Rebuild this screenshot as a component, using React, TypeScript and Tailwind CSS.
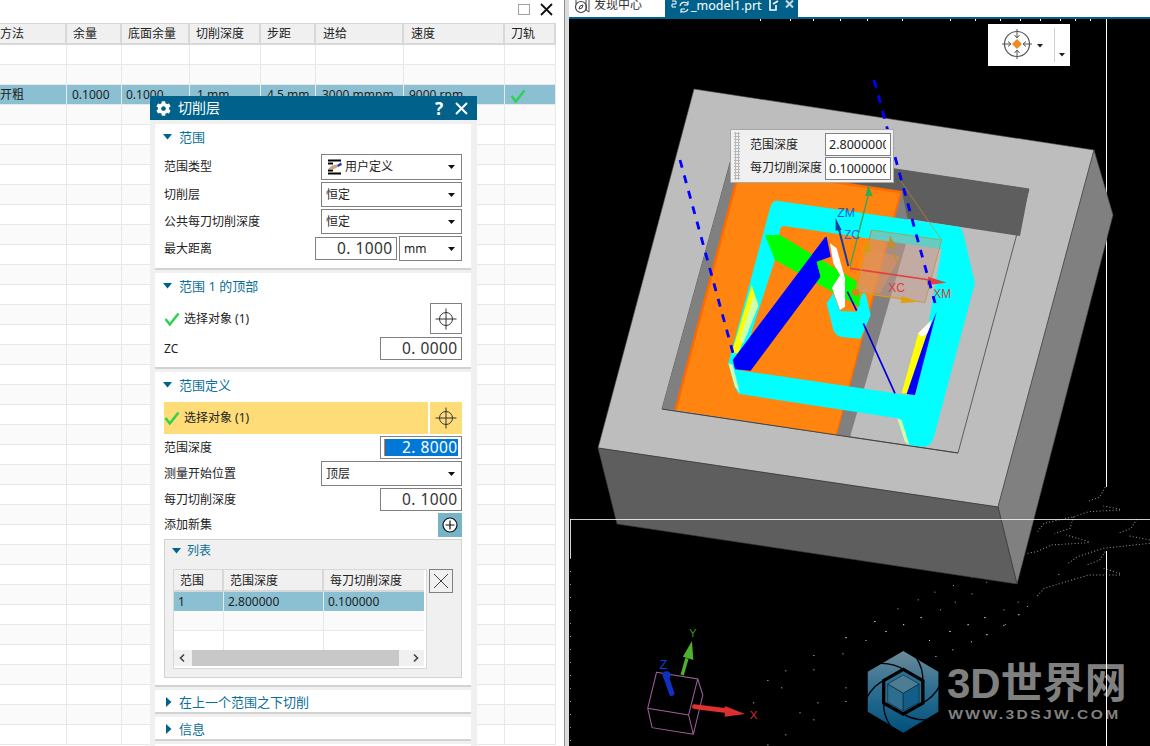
import React from "react";
import { FaCog } from "react-icons/fa";

const cols = [67, 55, 68, 71, 55, 88, 101, 51];
const headers = ["方法", "余量", "底面余量", "切削深度", "步距", "进给", "速度", "刀轨"];
const selected = ["开粗", "0.1000", "0.1000", "1 mm", "4.5 mm", "3000 mmpm", "9000 rpm", ""];
const pads = ["pl-0", "pl-[5px]", "pl-[4px]", "pl-[7px]", "pl-[6px]", "pl-[6px]", "pl-[5px]", "pl-[5px]"];
const hpads = ["pl-0", "pl-[6px]", "pl-[6px]", "pl-[6px]", "pl-[6px]", "pl-[7px]", "pl-[7px]", "pl-[6px]"];
const gridCls = "grid grid-cols-[67px_55px_68px_71px_55px_88px_101px_51px]";

function Check({ size = 16 }: { size?: number }) {
  return (
    <svg width={size} height={size} viewBox="0 0 16 16" className="shrink-0">
      <path d="M1.5 8 L5.8 13.5 L14.5 2.5" fill="none" stroke="#2ed150" strokeWidth="2.5" />
    </svg>
  );
}

function Caret({ open = true }: { open?: boolean }) {
  return open ? (
    <svg width="9" height="6" viewBox="0 0 9 6" className="shrink-0">
      <path d="M0 0 H9 L4.5 5.5Z" fill="#00628a" />
    </svg>
  ) : (
    <svg width="6" height="10" viewBox="0 0 6 10" className="shrink-0">
      <path d="M0 0 V10 L5.5 5Z" fill="#00628a" />
    </svg>
  );
}

function Cross() {
  return (
    <svg width="22" height="22" viewBox="0 0 22 22">
      <circle cx="11" cy="11" r="6.5" fill="none" stroke="#333" />
      <path d="M11 0.5 V21.5 M0.5 11 H21.5" stroke="#333" />
    </svg>
  );
}

function Select({ text, w = "w-[141px]", h = "h-[25px]", icon = false }: { text: string; w?: string; h?: string; icon?: boolean }) {
  return (
    <div className={`${w} ${h} flex items-center border border-[#808080] bg-white pl-[4px] pr-[6px] text-[12px] text-[#222]`}>
      {icon && (
        <svg width="16" height="16" viewBox="0 0 16 16" className="mr-[2px] ml-[1px] shrink-0">
          <path d="M1 1.5 H14 M1 14.5 H14 M1 4.5 H6 M1 11.5 H6" stroke="#000" strokeWidth="2" />
          <path d="M1 10 L5 6.5 L10 5.5 L11 8 L6 10.5Z" fill="#cfa77f" />
          <path d="M10 6 L14 3.5 L15 6 L11 8Z" fill="#2438c4" />
        </svg>
      )}
      <span className="flex-1 leading-none">{text}</span>
      <svg width="7" height="4" viewBox="0 0 7 4" className="shrink-0">
        <path d="M0 0 H7 L3.5 4Z" fill="#111" />
      </svg>
    </div>
  );
}

function NumText({ value }: { value: string }) {
  return <span className="whitespace-nowrap text-[15.5px] leading-none tracking-[0.45px]">{value}</span>;
}

function NumInput({ value, w = "w-[82px]", hl = false }: { value: string; w?: string; hl?: boolean }) {
  return (
    <div className={`${w} h-[23px] border border-[#808080] bg-white py-[2px] pl-[3px] pr-[3px]`}>
      <div
        className={`flex h-full items-center overflow-hidden ${
          hl ? "border-l border-[#f07820] bg-[#0078d7] pl-[17px] text-white" : "pl-[18px] text-[#333]"
        }`}
      >
        <NumText value={value} />
      </div>
    </div>
  );
}

function Row({ label, children }: { label: string; children: React.ReactNode }) {
  return (
    <div className="flex items-center justify-between">
      <span className="text-[12px] leading-none text-[#222]">{label}</span>
      {children}
    </div>
  );
}

function Section({ title, open = true, cls, children }: { title: string; open?: boolean; cls: string; children?: React.ReactNode }) {
  return (
    <div className={`${cls} shrink-0 border-b-2 border-[#d2d2d2] bg-white`}>
      <div className={`flex items-center ${open ? "h-[26px] gap-[7px] pl-[8px]" : "h-[22px] gap-[7px] pl-[11px] pt-[2px]"}`}>
        <Caret open={open} />
        <span className="text-[13px] leading-none text-[#0b6f99]">{title}</span>
      </div>
      {children && <div className="px-[9px] pt-[4px]">{children}</div>}
    </div>
  );
}

function Dialog() {
  return (
    <div className="absolute left-[150px] top-[96px] z-10 flex h-[650px] w-[327px] flex-col overflow-hidden bg-[#f0f0f0]">
      <div className="flex h-[24px] shrink-0 items-center bg-[#00628a] pl-[6px] pr-[9px] text-white">
        <FaCog className="text-[15px]" />
        <span className="ml-[7px] text-[14px] leading-none">切削层</span>
        <span className="ml-auto mr-[12px] text-[17px] font-bold leading-none">?</span>
        <svg width="13" height="13" viewBox="0 0 13 13">
          <path d="M1 1 L12 12 M12 1 L1 12" stroke="#fff" strokeWidth="2" />
        </svg>
      </div>
      <div className="flex flex-col gap-[3px] pl-[5px] pr-[6px] pt-[4px]">
        <Section title="范围" cls="h-[146px]">
          <div className="flex flex-col gap-[2px]">
            <Row label="范围类型"><Select text="用户定义" h="h-[26px]" icon /></Row>
            <Row label="切削层"><Select text="恒定" /></Row>
            <Row label="公共每刀切削深度"><Select text="恒定" /></Row>
            <Row label="最大距离">
              <div className="flex items-center gap-[2px]">
                <NumInput value="0. 100000" />
                <Select text="mm" w="w-[63px]" />
              </div>
            </Row>
          </div>
        </Section>
        <Section title="范围 1 的顶部" cls="h-[96px]">
          <div className="flex flex-col gap-[3px]">
            <div className="flex items-center justify-between">
              <span className="flex items-center gap-[4px] text-[12px] text-[#222]"><Check />选择对象 (1)</span>
              <div className="flex h-[31px] w-[32px] items-center justify-center border border-[#808080]"><Cross /></div>
            </div>
            <Row label="ZC"><NumInput value="0. 000000" /></Row>
          </div>
        </Section>
        <Section title="范围定义" cls="h-[315px]">
          <div className="flex flex-col gap-[2px]">
            <div className="flex h-[32px] gap-[2px]">
              <div className="flex flex-1 items-center gap-[4px] bg-[#fedd78] text-[12px] text-[#222]"><Check />选择对象 (1)</div>
              <div className="flex w-[32px] items-center justify-center bg-[#fedd78]"><Cross /></div>
            </div>
            <Row label="范围深度"><NumInput value="2. 800000" hl /></Row>
            <Row label="测量开始位置"><Select text="顶层" /></Row>
            <Row label="每刀切削深度"><NumInput value="0. 100000" /></Row>
            <Row label="添加新集">
              <div className="flex h-[24px] w-[24px] items-center justify-center bg-[#78b4c8]">
                <svg width="16" height="16" viewBox="0 0 16 16">
                  <circle cx="8" cy="8" r="7" fill="#fff" stroke="#111" strokeWidth="1.2" />
                  <path d="M8 3.5 V12.5 M3.5 8 H12.5" stroke="#111" strokeWidth="1.2" />
                </svg>
              </div>
            </Row>
            <div className="h-[139px] border border-[#d2d2d2] bg-[#f0f0f0] pl-[7px]">
              <div className="flex h-[22px] items-center gap-[6px]">
                <Caret />
                <span className="text-[12px] leading-none text-[#0b6f99]">列表</span>
              </div>
              <div className="mt-[7px] ml-[1px] flex items-start gap-[2px]">
                <div className="h-[100px] w-[254px] border border-[#d8d8d8] bg-white pr-[2px] text-[12px] text-[#222]">
                  <div className="grid h-[22px] grid-cols-[50px_100px_100px] border-b-2 border-[#d8d8d8] bg-[#f0f0f0] leading-[22px]">
                    <span className="border-r-2 border-[#d8d8d8] pl-[6px]">范围</span>
                    <span className="border-r-2 border-[#d8d8d8] pl-[6px]">范围深度</span>
                    <span className="pl-[6px]">每刀切削深度</span>
                  </div>
                  <div className="grid h-[19px] grid-cols-[50px_100px_100px] bg-[#8ac0d2] leading-[19px]">
                    <span className="border-r border-[#e8e8e8] pl-[4px]">1</span>
                    <span className="border-r border-[#e8e8e8] pl-[4px]">2.800000</span>
                    <span className="pl-[4px]">0.100000</span>
                  </div>
                  <div className="grid h-[20px] grid-cols-[50px_100px_100px] border-b border-[#e8e8e8] bg-[#fafafa]">
                    <span className="border-r border-[#e8e8e8]" /><span className="border-r border-[#e8e8e8]" /><span />
                  </div>
                  <div className="grid h-[19px] grid-cols-[50px_100px_100px] bg-white">
                    <span className="border-r border-[#e8e8e8]" /><span className="border-r border-[#e8e8e8]" /><span />
                  </div>
                  <div className="flex h-[16px] w-[250px] items-center bg-[#f0f0f0]">
                    <svg width="18" height="16" viewBox="0 0 18 16" className="shrink-0">
                      <path d="M10 4.5 L6.5 8 L10 11.5" fill="none" stroke="#444" strokeWidth="1.6" />
                    </svg>
                    <div className="h-[16px] w-[207px] bg-[#c8c8c8]" />
                    <svg width="25" height="16" viewBox="0 0 25 16" className="shrink-0">
                      <path d="M15 4.5 L18.5 8 L15 11.5" fill="none" stroke="#444" strokeWidth="1.6" />
                    </svg>
                  </div>
                </div>
                <div className="flex h-[24px] w-[24px] items-center justify-center border border-[#808080]">
                  <svg width="16" height="16" viewBox="0 0 16 16">
                    <path d="M1 1 L15 15 M15 1 L1 15" stroke="#444" />
                  </svg>
                </div>
              </div>
            </div>
          </div>
        </Section>
        <Section title="在上一个范围之下切削" open={false} cls="h-[24px]" />
        <Section title="信息" open={false} cls="h-[24px]" />
        <div className="h-[10px] shrink-0 bg-white" />
      </div>
    </div>
  );
}

function LeftPanel() {
  const rows = Array.from({ length: 35 }, (_, i) => i);
  return (
    <div className="relative h-full w-[564px] shrink-0 bg-white">
      <div className="flex h-[23px] items-start justify-end pr-[11px] pt-[4px]">
        <div className="mr-[10px] h-[11px] w-[12px] border border-[#a0a0a0]" />
        <svg width="13" height="13" viewBox="0 0 13 13" className="-mt-[1px]">
          <path d="M1 1 L12 12 M12 1 L1 12" stroke="#111" strokeWidth="1.8" />
        </svg>
      </div>
      <div className="w-[556px]">
        <div className={`${gridCls} h-[22px] border-y-[1px] border-b-2 border-[#d8d8d8] bg-[#f0f0f0] text-[12px] text-[#222]`}>
          {headers.map((h, i) => (
            <span key={h} className={`overflow-hidden border-r-2 border-[#d8d8d8] leading-[20px] ${hpads[i]}`}>{h}</span>
          ))}
        </div>
        {rows.map((r) => (
          <div
            key={r}
            className={`${gridCls} h-[20px] border-b border-[#e8e8e8] text-[12px] text-[#222] ${
              r === 2 ? "bg-[#8ac0d2]" : r % 2 ? "bg-[#fafafa]" : "bg-white"
            }`}
          >
            {cols.map((_, i) => (
              <span key={i} className={`whitespace-nowrap border-r border-[#e8e8e8] leading-[19px] ${pads[i]}`}>
                {r === 2 && selected[i]}
                {r === 2 && i === 7 && (
                  <span className="inline-block translate-y-[3px]"><Check /></span>
                )}
              </span>
            ))}
          </div>
        ))}
      </div>
      <Dialog />
    </div>
  );
}

const dots6 = [[752,33],[785,63],[838,43],[889,21],[975,63],[1028,43],[1078,21],[1134,45],[1178,13],[1084,72],[1038,94],[983,118],[914,90],[933,138],[726,90],[667,81],[658,130],[572,135],[572,178],[489,181],[436,210],[477,232],[667,232],[394,277],[584,277],[667,273],[531,307],[572,328],[489,373],[436,403]];
const dots8 = [[1175,480],[1125,510],[1150,520],[1085,530],[1125,545],[1035,555],[985,575],[1085,580],[940,598],[1040,605],[885,625],[1000,628],[1120,652],[948,652],[823,663],[900,672],[1075,672],[853,693],[1025,693],[1175,672],[1125,703],[745,712],[1210,605],[1235,618],[1172,628],[1212,642],[1320,522]];
const ticks = [760,790,813,840,867,902,950,975,1000,1020,1040,1060,1075,1090];
const scatter = [
  "M1445 262 L1430 292 L1395 305",
  "M1485 328 L1440 318",
  "M1485 330 L1400 335 L1360 350 L1280 370 L1260 398",
  "M1360 350 L1350 385 L1308 400",
  "M1400 425 L1340 405",
  "M1400 428 L1300 435 L1260 455 L1235 460",
  "M1530 358 L1515 385 L1480 400",
  "M1565 420 L1510 408",
  "M1565 430 L1440 445 L1370 470 L1345 490",
  "M1445 455 L1430 480 L1395 495",
  "M1485 520 L1440 505",
  "M1485 525 L1400 525 L1340 545 L1280 565 L1260 590",
];

function Scene() {
  return (
    <svg viewBox="569 19 581 727" className="absolute inset-0 h-full w-full">
      <defs>
        <linearGradient id="hex" x1="0" y1="0" x2="0" y2="1">
          <stop offset="0" stopColor="#6d8a98" />
          <stop offset="0.45" stopColor="#2f7093" />
          <stop offset="1" stopColor="#00507c" />
        </linearGradient>
        <pattern id="dither" width="3" height="3" patternUnits="userSpaceOnUse">
          <rect width="3" height="3" fill="#ffffa0" />
          <rect width="1.5" height="1.5" fill="#40ffe0" />
        </pattern>
      </defs>
      <g transform="translate(570 400) scale(.3704 .3333)" fill="none" stroke="#9a9a9a" strokeWidth="2.8" strokeDasharray="2.8 6">
        {scatter.map((d) => <path key={d} d={d} />)}
      </g>
      {dots8.map(([x, y], i) => (
        <rect key={i} x={570 + x / 2.703} y={400 + y / 3} width="1" height="1" fill="#a8a8a8" />
      ))}
      {dots6.map(([x, y], i) => (
        <rect key={i} x={620 + x / 2.958} y={610 + y / 3} width="1" height="1" fill="#d8d8d8" />
      ))}
      {ticks.map((x) => <rect key={x} x={x} y={19} width="1" height="2" fill="#fff" />)}
      <path d="M1106.5 19 V487 M1106.5 551 V746" stroke="#fff" />
      <path d="M570.5 519 V558" stroke="#d8d8d8" />
      <path d="M570.5 558 V746" stroke="#999" strokeDasharray="1 12" />
      {/* block */}
      <polygon points="694,89 1094,150 998,507 598,448" fill="#bdbdbd" stroke="#4a4a4a" strokeWidth="0.6" />
      <polygon points="1094,150 1113,215 1017,584 998,507" fill="#808080" stroke="#4a4a4a" strokeWidth="0.6" />
      <polygon points="598,448 998,507 1017,584 617,524" fill="#5e5e5e" stroke="#3a3a3a" strokeWidth="0.6" />
      {/* pocket */}
      <polygon points="735,145 1029,189 958,453 662,409" fill="#bdbdbd" stroke="#333" strokeWidth="0.7" />
      <polygon points="735,145 1029,189 1020,236 902,218 902,192 740,168" fill="#5e5e5e" />
      <polygon points="662,409 735,145 745,147 675,410" fill="#808080" />
      <polygon points="675,410 740,168 901,192 837,435" fill="#ff8510" />
      <path d="M675.5 410 L740 168 L901 192 L837 435" fill="none" stroke="#ff6a00" strokeWidth="2.5" />
      <polygon points="902,192 910,230 850,437 837,435" fill="#808080" />
      <path d="M662 409 L958 453" stroke="#333" strokeWidth="0.7" />
      {/* toolpath */}
      <g transform="translate(660 180) scale(.3333)">
        <path
          fillRule="evenodd"
          fill="#00ffff"
          d="M350 62 L895 140 Q905 142 910 160 L945 310 L822 770 Q815 800 790 800 L745 795 L712 715 L240 642 Q232 640 225 620 L205 550 L330 85 Q335 62 350 62 Z M372 138 Q362 138 360 150 L345 240 L270 470 L232 570 L740 645 L768 645 L845 208 Z"
        />
        <path fill="#00ffff" d="M500 370 L520 450 Q528 470 550 472 L602 476 L632 405 L612 320 L590 395 L540 393 L520 340Z" />
        <polygon points="275,315 295,375 235,520 215,520" fill="#ffff00" />
        <polygon points="282,345 295,378 250,490 240,480" fill="url(#dither)" />
        <polygon points="205,550 218,555 240,640 225,620" fill="url(#dither)" />
        <polygon points="712,715 725,720 748,795 735,785" fill="url(#dither)" />
        <polygon points="315,165 360,165 600,310 598,380 345,240" fill="#00ff00" />
        <polygon points="510,190 530,205 555,295 555,380 540,390 515,320 540,285 520,250" fill="#fff" />
        <polygon points="500,170 512,230 470,245 482,290 272,572 225,568 218,540 495,172" fill="#0000ff" />
        <polygon points="470,245 540,285 515,325 482,290" fill="#00ff00" />
        <polygon points="775,460 815,420 800,470 745,640 725,640" fill="#ffff00" />
        <polygon points="775,460 815,420 805,460 785,470" fill="#fff" />
        <polygon points="830,395 765,645 740,642 800,465" fill="#0000ff" />
        <path d="M562 335 L590 392 M610 430 L705 640" stroke="#0000dd" strokeWidth="5" />
        {/* gizmo */}
        <polygon points="600,200 720,230 660,340 585,335" fill="#ff8a20" opacity="0.55" />
        <polygon points="635,150 845,180 795,368 585,335" fill="#c89a88" opacity="0.5" />
        <path d="M635 150 L845 180 L795 368 L585 335 Z M720 0 L845 180 M635 150 L585 335" fill="none" stroke="#c88a30" strokeWidth="2" />
        <path d="M570 260 L625 45" stroke="#34a853" strokeWidth="4" />
        <path d="M625 15 L638 48 L616 48Z" fill="#34a853" />
        <path d="M565 258 L535 140" stroke="#1040a0" strokeWidth="6" />
        <path d="M527 115 L545 150 L527 152Z" fill="#1040a0" />
        <path d="M570 265 L810 300" stroke="#e04040" strokeWidth="5" />
        <path d="M860 308 L805 290 L802 315Z" fill="#e04040" />
        <path d="M587 337 L735 358" stroke="#e0a010" strokeWidth="3" />
        <path d="M775 365 L725 348 L722 370Z" fill="#e0a010" />
        <path d="M587 337 L618 210" stroke="#e0a010" strokeWidth="3" />
        <path d="M625 175 L634 215 L608 215Z" fill="#d89a10" />
        <path d="M715 262 L695 190" stroke="#c09030" strokeWidth="3" />
        <path d="M690 165 L708 200 L684 205Z" fill="#c09030" />
        <circle cx="587" cy="337" r="11" fill="#d08a10" />
        <text x="532" y="110" fontSize="36" fill="#1560d0" fontFamily="Liberation Sans">ZM</text>
        <text x="552" y="178" fontSize="36" fill="#3a60d8" fontFamily="Liberation Sans">ZC</text>
        <text x="685" y="336" fontSize="36" fill="#d84040" fontFamily="Liberation Sans">XC</text>
        <text x="820" y="354" fontSize="36" fill="#d84040" fontFamily="Liberation Sans">XM</text>
      </g>
      <path d="M874 80 L935 303" stroke="#0000ff" strokeWidth="2.8" strokeDasharray="8 8" />
      <path d="M680 160 L733 353" stroke="#0000ff" strokeWidth="2.8" strokeDasharray="8 8" />
      <path d="M570 519.5 H1150" stroke="#fff" opacity="0.8" />
      {/* triad + logo */}
      <g transform="translate(620 610) scale(.338 .3333)">
        <path d="M108 187 L230 207 L203 315 L82 295 Z M230 207 L245 255 L217 373 L203 315 M82 295 L95 353 L217 373" fill="none" stroke="#a060a0" strokeWidth="3" />
        <path d="M184 195 L198 145" stroke="#4fb030" strokeWidth="10" />
        <path d="M213 93 L217 150 L186 140Z" fill="#4fb030" />
        <path d="M153 250 L138 205" stroke="#1030c0" strokeWidth="16" strokeLinecap="round" />
        <circle cx="138" cy="196" r="12" fill="#1030c0" />
        <path d="M220 290 L315 302" stroke="#e03030" strokeWidth="14" strokeLinecap="round" />
        <path d="M370 312 L310 288 L310 320Z" fill="#d83030" />
        <text x="204" y="82" fontSize="34" fill="#3a9020" fontFamily="Liberation Sans">Y</text>
        <text x="118" y="176" fontSize="36" fill="#1040e0" fontFamily="Liberation Sans">Z</text>
        <text x="384" y="328" fontSize="34" fill="#d03030" fontFamily="Liberation Sans">X</text>
        <polygon points="838,123 942,185 942,305 838,368 733,305 733,185" fill="url(#hex)" />
        {[0, 60, 120, 180, 240, 300].map((a) => (
          <path key={a} transform={`rotate(${a} 838 245)`} d="M875 140 Q900 180 895 215" fill="none" stroke="#000" strokeWidth="4" />
        ))}
        <polygon points="838,178 896,212 896,279 838,312 780,279 780,212" fill="#2a6f92" stroke="#000" strokeWidth="10" />
        <polygon points="838,195 885,222 838,250 792,222" fill="#4d7d93" stroke="#0a2a3a" strokeWidth="2" />
        <polygon points="792,222 838,250 838,303 792,277" fill="#2d6d8f" stroke="#0a2a3a" strokeWidth="2" />
        <polygon points="885,222 838,250 838,303 885,277" fill="#125e88" stroke="#0a2a3a" strokeWidth="2" />
      </g>
    </svg>
  );
}

function Viewport() {
  return (
    <div className="flex h-full flex-1 flex-col">
      <div className="flex h-[19px] shrink-0 items-start overflow-hidden border-b-2 border-[#00628a] bg-white">
        <div className="flex h-[17px] w-[96px] shrink-0 items-start">
          <svg width="20" height="17" viewBox="0 0 20 17" className="ml-[4px] shrink-0">
            <circle cx="8" cy="7" r="5.5" fill="none" stroke="#444" strokeWidth="1.2" />
            <path d="M6 9 L7 6 L10 5 L9 8Z" fill="none" stroke="#444" />
            <path d="M3 -1 L3 4 M13 -1 V10 L16 12 V-1" fill="none" stroke="#444" />
          </svg>
          <span className="ml-[1px] text-[12px] leading-[10px] text-[#333]">发现中心</span>
        </div>
        <div className="flex h-[17px] w-[133px] shrink-0 items-start bg-[#00628a] text-white">
          <svg width="22" height="14" viewBox="0 0 22 14" className="ml-[6px] shrink-0">
            <path d="M1 1 H5 V4 H1 V7 H5" fill="none" stroke="#fff" />
            <path d="M9 6 A4.5 4.5 0 0 1 17 4 M17 9 A4.5 4.5 0 0 1 10 11" fill="none" stroke="#fff" strokeWidth="1.1" />
            <path d="M17 1 V5 H13" fill="none" stroke="#fff" />
            <path d="M10 13 V9 H14" fill="none" stroke="#fff" />
          </svg>
          <span className="-ml-[2px] text-[12.5px] leading-[11px]">_model1.prt</span>
          <svg width="10" height="12" viewBox="0 0 10 12" className="ml-[7px] shrink-0">
            <path d="M1 0 V10 H7 V5" fill="none" stroke="#fff" strokeWidth="1.6" />
            <path d="M4 4 L9 1" stroke="#fff" strokeWidth="1.6" />
          </svg>
          <svg width="9" height="9" viewBox="0 0 9 9" className="ml-[6px] shrink-0">
            <path d="M1 0.5 L8 7.5 M8 0.5 L1 7.5" stroke="#c8d8e0" strokeWidth="2" />
          </svg>
        </div>
      </div>
      <div className="relative flex-1 overflow-hidden bg-black">
        <Scene />
        <div className="absolute left-[419px] top-[5px] flex h-[42px] w-[82px] bg-white">
          <svg width="30" height="30" viewBox="0 0 30 30" className="ml-[14px] mt-[5px] shrink-0">
            <circle cx="15" cy="15" r="12.5" fill="none" stroke="#555" strokeWidth="1.2" />
            <path d="M15 0 V9 M15 21 V30 M0 15 H9 M21 15 H30 M12.5 6 L15 9 L17.5 6 M12.5 24 L15 21 L17.5 24 M6 12.5 L9 15 L6 17.5 M24 12.5 L21 15 L24 17.5" fill="none" stroke="#555" />
            <path d="M15 10 L20 15 L15 20 L10 15Z" fill="#f08a20" />
          </svg>
          <svg width="6" height="4" viewBox="0 0 6 4" className="ml-[5px] mt-[20px] shrink-0"><path d="M0 0 H6 L3 3.5Z" fill="#222" /></svg>
          <div className="ml-[11px] mt-[4px] h-[34px] w-px bg-[#d0d0d0]" />
          <svg width="6" height="4" viewBox="0 0 6 4" className="ml-[4px] mt-[29px] shrink-0"><path d="M0 0 H6 L3 3.5Z" fill="#222" /></svg>
        </div>
        <div className="absolute left-[161px] top-[110px] flex h-[54px] w-[164px] border border-[#a8a8a8] bg-[#f0f0f0] text-[12px] text-[#222]">
          <div className="ml-[3px] mt-[2px] h-[48px] w-[6px] bg-[radial-gradient(#b8b8b8_1.2px,transparent_1.3px)] bg-[length:3px_3px]" />
          <div className="ml-[10px] flex flex-col justify-around py-[3px] leading-none">
            <span>范围深度</span>
            <span>每刀切削深度</span>
          </div>
          <div className="absolute left-[94px] top-[3px] flex flex-col gap-px">
            <div className="h-[23px] w-[66px] border border-[#808080] bg-white pl-[3px] pr-[4px]">
              <div className="overflow-hidden whitespace-nowrap text-[12.5px] leading-[21px]">2.8000000</div>
            </div>
            <div className="h-[23px] w-[66px] border border-[#808080] bg-white pl-[3px] pr-[4px]">
              <div className="overflow-hidden whitespace-nowrap text-[12.5px] leading-[21px]">0.1000000</div>
            </div>
          </div>
        </div>
        <div className="absolute left-[378px] top-[640px] flex flex-col text-[#808080]">
          <span className="whitespace-nowrap font-['Liberation_Sans','Noto_Sans_CJK_SC',sans-serif] text-[42px] font-bold leading-[50px]">3D世界网</span>
          <span className="-mt-[1px] origin-left scale-x-[1.25] whitespace-nowrap pl-[1px] font-['Liberation_Sans',sans-serif] text-[12.5px] font-bold leading-[14px] tracking-[1.9px]">WWW.3DSJW.COM</span>
        </div>
        <div className="absolute left-[537px] top-[640px] h-[90px] w-px bg-white" />
      </div>
    </div>
  );
}

export default function App() {
  return (
    <div className="flex h-[746px] w-[1150px] overflow-hidden bg-white font-['Noto_Sans','Noto_Sans_CJK_SC',sans-serif]">
      <LeftPanel />
      <div className="h-full w-[5px] shrink-0 border-l border-[#909090] bg-[#dcdcdc]" />
      <Viewport />
    </div>
  );
}
